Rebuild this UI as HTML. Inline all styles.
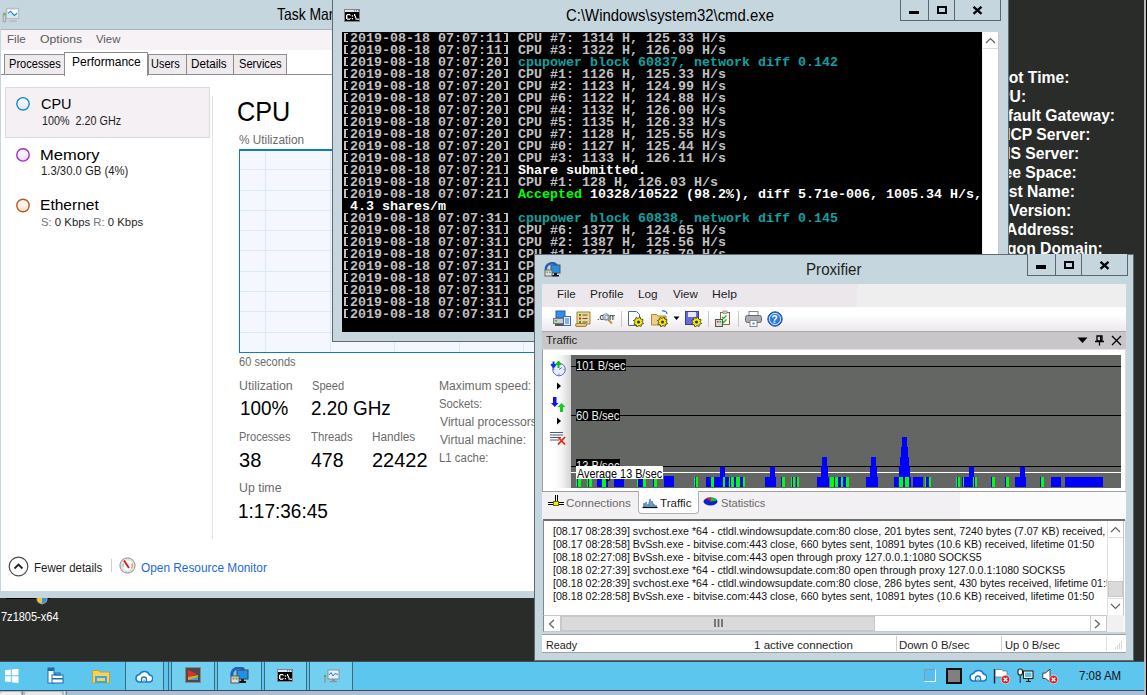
<!DOCTYPE html>
<html><head><meta charset="utf-8">
<style>
*{box-sizing:border-box;margin:0;padding:0}
html,body{width:1147px;height:695px;overflow:hidden}
body{position:relative;background:#2a2c2a;font-family:"Liberation Sans",sans-serif;color:#000}
.a{position:absolute}
.t{position:absolute;white-space:nowrap;line-height:1}
#con{font-family:"Liberation Mono",monospace;font-size:13.33px;font-weight:bold;color:#c0c0c0}
#con div{height:12px;line-height:12px;white-space:pre}
#con i{display:inline-block;width:8px;height:12px;position:relative;vertical-align:top}
#con i::before{content:'';box-sizing:border-box;position:absolute;left:2px;top:0.5px;width:4px;height:9px;border:0 solid #c0c0c0;border-top-width:1px;border-bottom-width:1px}
#con i.l::before{border-left-width:2px}
#con i.r::before{border-right-width:2px}
#con .c{color:#12a0a0}#con .w{color:#fff}#con .g{color:#00ff00}
</style></head><body>
<div class="t" style="left:987.8px;top:70.21px;font-size:15.7px;color:#fff;font-weight:bold">Boot Time:</div>
<div class="t" style="left:987.8px;top:89.21px;font-size:15.7px;color:#fff;font-weight:bold">CPU:</div>
<div class="t" style="left:987.8px;top:108.21px;font-size:15.7px;color:#fff;font-weight:bold">Default Gateway:</div>
<div class="t" style="left:987.8px;top:127.21px;font-size:15.7px;color:#fff;font-weight:bold">DHCP Server:</div>
<div class="t" style="left:987.8px;top:146.21px;font-size:15.7px;color:#fff;font-weight:bold">DNS Server:</div>
<div class="t" style="left:987.8px;top:165.21px;font-size:15.7px;color:#fff;font-weight:bold">Free Space:</div>
<div class="t" style="left:987.8px;top:184.21px;font-size:15.7px;color:#fff;font-weight:bold">Host Name:</div>
<div class="t" style="left:982.3px;top:203.21px;font-size:15.7px;color:#fff;font-weight:bold">OS Version:</div>
<div class="t" style="left:987.8px;top:222.21px;font-size:15.7px;color:#fff;font-weight:bold">IP Address:</div>
<div class="t" style="left:987.8px;top:241.21px;font-size:15.7px;color:#fff;font-weight:bold">Logon Domain:</div>
<div class="t" style="left:0.65px;top:610.62px;font-size:12.5px;color:#fff;transform:scale(0.8808,1.0);transform-origin:0 10.58px;">7z1805-x64</div>
<div class="a" style="left:6px;top:598px;width:44px;height:1px;background:#000"></div>
<svg class="a" style="left:36px;top:597px" width="12" height="8" viewBox="0 0 12 8"><path d="M0.5,0 H11.5 V2 Q11.5,6 6,7.5 Q0.5,6 0.5,2 Z" fill="#9aa4b0"/><path d="M1.5,0 H6 V6.5 Q1.5,5.5 1.5,2 Z" fill="#f0c820"/><path d="M6,0 H10.5 V2 Q10.5,5.5 6,6.5 Z" fill="#3a90e0"/></svg>
<div class="a" style="left:0px;top:0px;width:546px;height:598px;background:#c6d6df"></div>
<svg class="a" style="left:2px;top:7px" width="18" height="16" viewBox="0 0 18 16"><rect x="1.2" y="6" width="2.6" height="9" rx="0.8" fill="#d0d0d0" stroke="#8a8a8a" stroke-width="0.7"/><rect x="1.5" y="6.4" width="2" height="1.8" fill="#30d030"/><rect x="4.5" y="1.3" width="12.3" height="10.2" fill="#e4e4e4" stroke="#b0b0b0" stroke-width="0.8"/><rect x="6" y="3" width="9.3" height="7" fill="#fff"/><path d="M6,6.3 L8.4,4.2 L12.3,8.4 L14.6,6.3 L15.3,6.3 V10 H6 Z" fill="#c8ecfa"/><polyline points="6,6.3 8.4,4.2 12.3,8.4 15,6.2" fill="none" stroke="#1a80c8" stroke-width="1.1"/><rect x="9.5" y="11.5" width="3" height="2" fill="#c8c8c8"/><rect x="7" y="13.3" width="8" height="1.6" fill="#bdbdbd"/></svg>
<div class="t" style="left:276.72px;top:6.23px;font-size:16.5px;color:#000;transform:scale(0.8439,1.0);transform-origin:0 13.97px;">Task Manager</div>
<div class="a" style="left:1px;top:30px;width:545px;height:20px;background:#f6f2f6"></div>
<div class="a" style="left:1px;top:29px;width:545px;height:1px;background:#a9b5bd"></div>
<div class="t" style="left:7.47px;top:34.19px;font-size:11px;color:#5a5a5a;transform:scale(1.0579,1.0);transform-origin:0 9.31px;">File</div>
<div class="t" style="left:39.91px;top:34.19px;font-size:11px;color:#5a5a5a;transform:scale(1.1093,1.0);transform-origin:0 9.31px;">Options</div>
<div class="t" style="left:96.20px;top:34.19px;font-size:11px;color:#5a5a5a;transform:scale(1.0282,1.0);transform-origin:0 9.31px;">View</div>
<div class="a" style="left:1px;top:50px;width:545px;height:541px;background:#fff"></div>
<div class="a" style="left:1px;top:74px;width:545px;height:1px;background:#8c8c8c"></div>
<div class="a" style="left:4px;top:54px;width:61px;height:21px;background:#eeeaee;border:1px solid #8c8c8c"></div>
<div class="a" style="left:148px;top:54px;width:39px;height:21px;background:#eeeaee;border:1px solid #8c8c8c"></div>
<div class="a" style="left:186px;top:54px;width:48px;height:21px;background:#eeeaee;border:1px solid #8c8c8c"></div>
<div class="a" style="left:233px;top:54px;width:54px;height:21px;background:#eeeaee;border:1px solid #8c8c8c"></div>
<div class="a" style="left:64px;top:52px;width:84px;height:24px;background:#fff;border:1px solid #8c8c8c;border-bottom:none"></div>
<div class="t" style="left:8.61px;top:57.92px;font-size:12.5px;color:#000;transform:scale(0.8863,1.0);transform-origin:0 10.58px;">Processes</div>
<div class="t" style="left:151.43px;top:57.92px;font-size:12.5px;color:#000;transform:scale(0.8792,1.0);transform-origin:0 10.58px;">Users</div>
<div class="t" style="left:191.37px;top:57.92px;font-size:12.5px;color:#000;transform:scale(0.9339,1.0);transform-origin:0 10.58px;">Details</div>
<div class="t" style="left:238.55px;top:57.92px;font-size:12.5px;color:#000;transform:scale(0.8904,1.0);transform-origin:0 10.58px;">Services</div>
<div class="t" style="left:71.54px;top:55.82px;font-size:12.5px;color:#000;transform:scale(0.9614,1.0);transform-origin:0 10.58px;">Performance</div>
<div class="a" style="left:5px;top:87px;width:205px;height:51px;background:#f4f0f4;border:1px solid #dcdcdc"></div>
<svg class="a" style="left:16px;top:97px" width="15" height="15" viewBox="0 0 15 15"><defs><linearGradient id="cg0" x1="0" y1="0" x2="0" y2="1"><stop offset="0" stop-color="#ffffff"/><stop offset="1" stop-color="#d6e8f6"/></linearGradient></defs><circle cx="7" cy="6.85" r="6.2" fill="url(#cg0)" stroke="#1a86cc" stroke-width="1.4"/></svg>
<svg class="a" style="left:16px;top:148px" width="15" height="15" viewBox="0 0 15 15"><defs><linearGradient id="cg1" x1="0" y1="0" x2="0" y2="1"><stop offset="0" stop-color="#ffffff"/><stop offset="1" stop-color="#f1dcf8"/></linearGradient></defs><circle cx="7" cy="6.90" r="6.2" fill="url(#cg1)" stroke="#9b30c8" stroke-width="1.4"/></svg>
<svg class="a" style="left:16px;top:198px" width="15" height="15" viewBox="0 0 15 15"><defs><linearGradient id="cg2" x1="0" y1="0" x2="0" y2="1"><stop offset="0" stop-color="#ffffff"/><stop offset="1" stop-color="#f8e2cc"/></linearGradient></defs><circle cx="7" cy="7.50" r="6.2" fill="url(#cg2)" stroke="#b85a1c" stroke-width="1.4"/></svg>
<div class="t" style="left:40.68px;top:96.73px;font-size:14.5px;color:#000;transform:scale(0.9985,1.0);transform-origin:0 12.27px;">CPU</div>
<div class="t" style="left:42.04px;top:114.84px;font-size:12px;color:#1e1e1e;transform:scale(0.8994,1.0);transform-origin:0 10.16px;">100%&nbsp; 2.20 GHz</div>
<div class="t" style="left:40.08px;top:147.73px;font-size:14.5px;color:#000;transform:scale(1.1386,1.0);transform-origin:0 12.27px;">Memory</div>
<div class="t" style="left:40.61px;top:165.34px;font-size:12px;color:#1e1e1e;transform:scale(0.9415,1.0);transform-origin:0 10.16px;">1.3/30.0 GB (4%)</div>
<div class="t" style="left:40.16px;top:198.43px;font-size:14.5px;color:#000;transform:scale(1.0729,1.0);transform-origin:0 12.27px;">Ethernet</div>
<div class="t" style="left:40.95px;top:216.87px;font-size:11.5px;color:#1e1e1e;transform:scale(0.9859,1.0);transform-origin:0 9.73px;"><span style="color:#777">S:</span> 0 Kbps <span style="color:#777">R:</span> 0 Kbps</div>
<div class="a" style="left:212px;top:96px;width:1px;height:443px;background:#e3e3e3"></div>
<div class="t" style="left:236.94px;top:97.72px;font-size:27.5px;color:#000;transform:scale(0.9177,1.0);transform-origin:0 23.28px;">CPU</div>
<div class="t" style="left:239.15px;top:133.84px;font-size:12px;color:#6b6b6b;transform:scale(0.9848,1.0);transform-origin:0 10.16px;">% Utilization</div>
<div class="a" style="left:239px;top:149px;width:310px;height:204px;background:#f4f7fd;border:1px solid #117dbb;border-top-width:2px"></div>
<div class="a" style="left:240px;top:169px;width:308px;height:1px;background:#d9e9f6"></div>
<div class="a" style="left:240px;top:190px;width:308px;height:1px;background:#d9e9f6"></div>
<div class="a" style="left:240px;top:210px;width:308px;height:1px;background:#d9e9f6"></div>
<div class="a" style="left:240px;top:230px;width:308px;height:1px;background:#d9e9f6"></div>
<div class="a" style="left:240px;top:250px;width:308px;height:1px;background:#d9e9f6"></div>
<div class="a" style="left:240px;top:271px;width:308px;height:1px;background:#d9e9f6"></div>
<div class="a" style="left:240px;top:291px;width:308px;height:1px;background:#d9e9f6"></div>
<div class="a" style="left:240px;top:311px;width:308px;height:1px;background:#d9e9f6"></div>
<div class="a" style="left:240px;top:332px;width:308px;height:1px;background:#d9e9f6"></div>
<div class="a" style="left:265px;top:151px;width:1px;height:201px;background:#d9e9f6"></div>
<div class="a" style="left:330px;top:151px;width:1px;height:201px;background:#d9e9f6"></div>
<div class="a" style="left:394px;top:151px;width:1px;height:201px;background:#d9e9f6"></div>
<div class="a" style="left:459px;top:151px;width:1px;height:201px;background:#d9e9f6"></div>
<div class="a" style="left:523px;top:151px;width:1px;height:201px;background:#d9e9f6"></div>
<div class="t" style="left:239.25px;top:355.84px;font-size:12px;color:#6b6b6b;transform:scale(0.9219,1.0);transform-origin:0 10.16px;">60 seconds</div>
<div class="t" style="left:238.63px;top:379.84px;font-size:12px;color:#6b6b6b;transform:scale(1.0316,1.0);transform-origin:0 10.16px;">Utilization</div>
<div class="t" style="left:311.85px;top:379.84px;font-size:12px;color:#6b6b6b;transform:scale(0.9271,1.0);transform-origin:0 10.16px;">Speed</div>
<div class="t" style="left:239.58px;top:399.29px;font-size:19.5px;color:#000;transform:scale(0.9679,1.0);transform-origin:0 16.51px;">100%</div>
<div class="t" style="left:311.36px;top:399.29px;font-size:19.5px;color:#000;transform:scale(0.9676,1.0);transform-origin:0 16.51px;">2.20 GHz</div>
<div class="t" style="left:238.62px;top:430.84px;font-size:12px;color:#6b6b6b;transform:scale(0.9195,1.0);transform-origin:0 10.16px;">Processes</div>
<div class="t" style="left:310.77px;top:430.84px;font-size:12px;color:#6b6b6b;transform:scale(0.9442,1.0);transform-origin:0 10.16px;">Threads</div>
<div class="t" style="left:371.76px;top:430.84px;font-size:12px;color:#6b6b6b;transform:scale(0.9811,1.0);transform-origin:0 10.16px;">Handles</div>
<div class="t" style="left:238.90px;top:451.49px;font-size:19.5px;color:#000;transform:scale(1.0294,1.0);transform-origin:0 16.51px;">38</div>
<div class="t" style="left:310.61px;top:451.49px;font-size:19.5px;color:#000;transform:scale(0.9987,1.0);transform-origin:0 16.51px;">478</div>
<div class="t" style="left:371.70px;top:451.49px;font-size:19.5px;color:#000;transform:scale(1.0239,1.0);transform-origin:0 16.51px;">22422</div>
<div class="t" style="left:238.64px;top:482.34px;font-size:12px;color:#6b6b6b;transform:scale(1.0282,1.0);transform-origin:0 10.16px;">Up time</div>
<div class="t" style="left:238.17px;top:501.99px;font-size:19.5px;color:#000;transform:scale(0.9745,1.0);transform-origin:0 16.51px;">1:17:36:45</div>
<div class="t" style="left:438.53px;top:379.54px;font-size:12px;color:#6b6b6b;transform:scale(1.0095,1.0);transform-origin:0 10.16px;">Maximum speed:</div>
<div class="t" style="left:439.05px;top:397.54px;font-size:12px;color:#6b6b6b;transform:scale(0.9396,1.0);transform-origin:0 10.16px;">Sockets:</div>
<div class="t" style="left:439.50px;top:415.54px;font-size:12px;color:#6b6b6b;transform:scale(1.0114,1.0);transform-origin:0 10.16px;">Virtual processors:</div>
<div class="t" style="left:439.50px;top:433.54px;font-size:12px;color:#6b6b6b;transform:scale(1.0027,1.0);transform-origin:0 10.16px;">Virtual machine:</div>
<div class="t" style="left:438.59px;top:451.54px;font-size:12px;color:#6b6b6b;transform:scale(0.9496,1.0);transform-origin:0 10.16px;">L1 cache:</div>
<svg class="a" style="left:8px;top:556px" width="21" height="21" viewBox="0 0 21 21"><circle cx="10.5" cy="10.5" r="9.3" fill="#fff" stroke="#4a4a4a" stroke-width="1.2"/><polyline points="6.5,12.5 10.5,8.5 14.5,12.5" fill="none" stroke="#222" stroke-width="1.8"/></svg>
<div class="t" style="left:34.48px;top:561.72px;font-size:12.5px;color:#1e1e1e;transform:scale(0.9197,1.0);transform-origin:0 10.58px;">Fewer details</div>
<div class="a" style="left:111px;top:559px;width:1px;height:13px;background:#cfcfcf"></div>
<svg class="a" style="left:119px;top:557px" width="17" height="17" viewBox="0 0 17 17"><circle cx="8.5" cy="8.5" r="7.6" fill="#e8e8e8" stroke="#8a8a8a" stroke-width="1"/><circle cx="8.5" cy="8.5" r="5.6" fill="#fff" stroke="#c8c8c8" stroke-width="0.6"/><path d="M12.8,6.5 A5,5 0 0 1 12.5,11.5" fill="none" stroke="#f08a30" stroke-width="1.2"/><path d="M4.2,10 A5,5 0 0 1 4.5,6.5" fill="none" stroke="#8ab080" stroke-width="1"/><line x1="5" y1="3.5" x2="10" y2="11" stroke="#d81818" stroke-width="1.8"/></svg>
<div class="t" style="left:141.13px;top:561.72px;font-size:12.5px;color:#1a6ad6;transform:scale(0.9482,1.0);transform-origin:0 10.58px;">Open Resource Monitor</div>
<div class="a" style="left:332px;top:0px;width:677px;height:342px;background:#c6d6df;border:1px solid #5f6a70;border-top:none"></div>
<svg class="a" style="left:344px;top:9px" width="16" height="13" viewBox="0 0 16 13"><rect x="0.5" y="0.5" width="15" height="12" fill="#000" stroke="#7d8388"/><rect x="1" y="1" width="14" height="2" fill="#e4e6ee"/><rect x="10" y="1.3" width="1" height="1" fill="#4a5a9a"/><rect x="12" y="1.3" width="1" height="1" fill="#4a5a9a"/><rect x="14" y="1.3" width="1" height="1" fill="#4a5a9a"/><g fill="#fff"><rect x="3" y="5" width="3" height="1.2"/><rect x="3" y="9.6" width="3" height="1.2"/><rect x="2" y="5.8" width="1.4" height="4.2"/><rect x="5.8" y="5.6" width="1" height="1"/><rect x="5.8" y="9.2" width="1" height="1"/><rect x="7.8" y="6.3" width="1.3" height="1.3"/><rect x="7.8" y="9" width="1.3" height="1.3"/><rect x="10" y="5" width="1.2" height="2"/><rect x="10.8" y="6.8" width="1.2" height="2"/><rect x="11.5" y="8.6" width="1.2" height="2.2"/><rect x="13" y="9.6" width="2" height="1.2"/></g></svg>
<div class="t" style="left:566.25px;top:7.76px;font-size:16px;color:#000;transform:scale(0.9319,1.0);transform-origin:0 13.54px;">C:\Windows\system32\cmd.exe</div>
<div class="a" style="left:900px;top:0px;width:101px;height:21px;border:1px solid #5d686d;border-top:none;background:#c6d6df"></div>
<div class="a" style="left:928px;top:0px;width:1px;height:20px;background:#5d686d"></div>
<div class="a" style="left:954px;top:0px;width:1px;height:20px;background:#5d686d"></div>
<div class="a" style="left:909px;top:10.5px;width:10px;height:3.5px;background:#000"></div>
<div class="a" style="left:937px;top:6px;width:10px;height:8px;border:2px solid #000"></div>
<svg class="a" style="left:972px;top:6px" width="11" height="9" viewBox="0 0 11 9"><path d="M1.5,0.8 L9.5,7.8 M9.5,0.8 L1.5,7.8" stroke="#000" stroke-width="2.3"/></svg>
<div id="con" class="a" style="left:342px;top:32px;width:640px;height:300px;background:#000;padding-top:0.5px;overflow:hidden"><div><i class="l"></i>2019-08-18 07:07:11<i class="r"></i> CPU #7: 1314 H, 125.33 H/s</div><div><i class="l"></i>2019-08-18 07:07:11<i class="r"></i> CPU #3: 1322 H, 126.09 H/s</div><div><i class="l"></i>2019-08-18 07:07:20<i class="r"></i> <span class="c">cpupower block 60837, network diff 0.142</span></div><div><i class="l"></i>2019-08-18 07:07:20<i class="r"></i> CPU #1: 1126 H, 125.33 H/s</div><div><i class="l"></i>2019-08-18 07:07:20<i class="r"></i> CPU #2: 1123 H, 124.99 H/s</div><div><i class="l"></i>2019-08-18 07:07:20<i class="r"></i> CPU #6: 1122 H, 124.88 H/s</div><div><i class="l"></i>2019-08-18 07:07:20<i class="r"></i> CPU #4: 1132 H, 126.00 H/s</div><div><i class="l"></i>2019-08-18 07:07:20<i class="r"></i> CPU #5: 1135 H, 126.33 H/s</div><div><i class="l"></i>2019-08-18 07:07:20<i class="r"></i> CPU #7: 1128 H, 125.55 H/s</div><div><i class="l"></i>2019-08-18 07:07:20<i class="r"></i> CPU #0: 1127 H, 125.44 H/s</div><div><i class="l"></i>2019-08-18 07:07:20<i class="r"></i> CPU #3: 1133 H, 126.11 H/s</div><div><i class="l"></i>2019-08-18 07:07:21<i class="r"></i> <span class="w">Share submitted.</span></div><div><i class="l"></i>2019-08-18 07:07:21<i class="r"></i> CPU #1: 128 H, 126.03 H/s</div><div><i class="l"></i>2019-08-18 07:07:21<i class="r"></i> <span class="g">Accepted</span><span class="w"> 10328/10522 (98.2%), diff 5.71e-006, 1005.34 H/s,</span></div><div><span class="w"> 4.3 shares/m</span></div><div><i class="l"></i>2019-08-18 07:07:31<i class="r"></i> <span class="c">cpupower block 60838, network diff 0.145</span></div><div><i class="l"></i>2019-08-18 07:07:31<i class="r"></i> CPU #6: 1377 H, 124.65 H/s</div><div><i class="l"></i>2019-08-18 07:07:31<i class="r"></i> CPU #2: 1387 H, 125.56 H/s</div><div><i class="l"></i>2019-08-18 07:07:31<i class="r"></i> CPU #1: 1371 H, 126.70 H/s</div><div><i class="l"></i>2019-08-18 07:07:31<i class="r"></i> CPU #4: 1367 H, 126.12 H/s</div><div><i class="l"></i>2019-08-18 07:07:31<i class="r"></i> CPU #5: 1368 H, 126.33 H/s</div><div><i class="l"></i>2019-08-18 07:07:31<i class="r"></i> CPU #7: 1370 H, 125.91 H/s</div><div><i class="l"></i>2019-08-18 07:07:31<i class="r"></i> CPU #0: 1368 H, 125.40 H/s</div><div><i class="l"></i>2019-08-18 07:07:31<i class="r"></i> CPU #3: 1372 H, 126.02 H/s</div></div>
<div class="a" style="left:982px;top:32px;width:17px;height:300px;background:#fff;border-right:1px solid #c8c8c8;border-left:1px solid #f0f0f0"></div>
<div class="a" style="left:983px;top:48px;width:15px;height:1px;background:#dcdcdc"></div>
<svg class="a" style="left:985px;top:37px" width="11" height="7" viewBox="0 0 11 7"><polyline points="1,6 5.5,1.5 10,6" fill="none" stroke="#606060" stroke-width="1.2"/></svg>
<div class="a" style="left:534px;top:254px;width:600px;height:407px;background:#c6d6df;border:1px solid #5f6a70"></div>
<svg class="a" style="left:544px;top:262px" width="17" height="15" viewBox="0 0 17 15"><path d="M2,8 A6,6 0 0 1 13,4" fill="none" stroke="#1f5fc0" stroke-width="2.5"/><rect x="7" y="3" width="9" height="8" fill="#1e90e8" stroke="#555" stroke-width="1"/><rect x="10" y="11" width="3" height="2" fill="#222"/><rect x="8" y="13" width="7" height="1.5" fill="#111"/><rect x="1" y="8" width="7" height="6" fill="#ddd" stroke="#666" stroke-width="1"/><rect x="2.5" y="9.5" width="1.5" height="1.5" fill="#f07020"/><rect x="5" y="9.5" width="1.5" height="1.5" fill="#30c030"/></svg>
<div class="t" style="left:805.69px;top:260.63px;font-size:16.5px;color:#1e1e1e;transform:scale(0.9173,1.0);transform-origin:0 13.97px;">Proxifier</div>
<div class="a" style="left:1027px;top:254px;width:101px;height:22px;border:1px solid #5d686d;border-top:none;background:#c6d6df"></div>
<div class="a" style="left:1055px;top:254px;width:1px;height:21px;background:#5d686d"></div>
<div class="a" style="left:1081px;top:254px;width:1px;height:21px;background:#5d686d"></div>
<div class="a" style="left:1036px;top:265px;width:10px;height:4px;background:#000"></div>
<div class="a" style="left:1064px;top:261px;width:10px;height:8px;border:2px solid #000"></div>
<svg class="a" style="left:1099px;top:260.5px" width="11" height="9" viewBox="0 0 11 9"><path d="M1.5,0.8 L9.5,7.8 M9.5,0.8 L1.5,7.8" stroke="#000" stroke-width="2.3"/></svg>
<div class="a" style="left:542px;top:284px;width:584px;height:23px;background:linear-gradient(to right,#ebe7eb 0,#ebe7eb 315px,#eeeeee 315px)"></div>
<div class="t" style="left:557.27px;top:289.39px;font-size:11px;color:#1e1e1e;transform:scale(1.0519,1.0);transform-origin:0 9.31px;">File</div>
<div class="t" style="left:590.36px;top:289.39px;font-size:11px;color:#1e1e1e;transform:scale(1.0735,1.0);transform-origin:0 9.31px;">Profile</div>
<div class="t" style="left:638.46px;top:289.39px;font-size:11px;color:#1e1e1e;transform:scale(1.0679,1.0);transform-origin:0 9.31px;">Log</div>
<div class="t" style="left:672.80px;top:289.39px;font-size:11px;color:#1e1e1e;transform:scale(1.0493,1.0);transform-origin:0 9.31px;">View</div>
<div class="t" style="left:712.03px;top:289.39px;font-size:11px;color:#1e1e1e;transform:scale(1.1056,1.0);transform-origin:0 9.31px;">Help</div>
<div class="a" style="left:542px;top:307px;width:584px;height:24px;background:linear-gradient(to bottom,#fdfdfd 0%,#ffffff 30%,#ece8ec 100%)"></div>
<svg class="a" style="left:553px;top:310px" width="18" height="17" viewBox="0 0 18 17"><rect x="3" y="1" width="9" height="7" fill="#3a8ae8" stroke="#2a5aa8"/><rect x="0.5" y="8.5" width="11" height="5" fill="#c8ccd0" stroke="#777"/><rect x="2" y="10" width="2" height="1.5" fill="#2c2"/><rect x="10.5" y="6.5" width="7" height="9" fill="#e8f0ff" stroke="#3a6ac8"/><path d="M12,9h4M12,11h4M12,13h4" stroke="#3a6ac8"/><rect x="2" y="14" width="8" height="2" fill="#555"/></svg>
<svg class="a" style="left:575px;top:310px" width="17" height="17" viewBox="0 0 17 17"><path d="M2,2 h13 v12 h-13 z" fill="#f0d890" stroke="#a08040"/><rect x="0.5" y="13.5" width="11" height="3" rx="1.5" fill="#e8c878" stroke="#a08040"/><rect x="4" y="4" width="2" height="2" fill="#20a020"/><rect x="4" y="7.5" width="2" height="2" fill="#e02020"/><rect x="4" y="11" width="2" height="2" fill="#20a020"/><path d="M7.5,5h5M7.5,8.5h5M7.5,12h5" stroke="#555" stroke-width="1.2"/></svg>
<svg class="a" style="left:597px;top:311px" width="18" height="14" viewBox="0 0 18 14"><text x="0" y="9" font-family="Liberation Sans" font-size="9" fill="#000">.com</text><circle cx="9" cy="6" r="3.2" fill="#c8dcf0" fill-opacity="0.6" stroke="#6a8aaa"/><line x1="11" y1="8.5" x2="15" y2="12.5" stroke="#c09030" stroke-width="1.8"/></svg>
<div class="a" style="left:621px;top:311px;width:1px;height:16px;background:#c8c8c8"></div>
<svg class="a" style="left:627px;top:310px" width="17" height="17" viewBox="0 0 17 17"><path d="M1.5,1.5 h8 l3,3 v11 h-11 z" fill="#fff" stroke="#4a6a9a"/><polygon points="15.20,12.00 16.40,12.98 16.12,13.91 14.58,14.06 14.12,14.62 14.28,16.16 13.41,16.62 12.22,15.63 11.50,15.70 10.52,16.90 9.59,16.62 9.44,15.08 8.88,14.62 7.34,14.78 6.88,13.91 7.87,12.72 7.80,12.00 6.60,11.02 6.88,10.09 8.42,9.94 8.88,9.38 8.72,7.84 9.59,7.38 10.78,8.37 11.50,8.30 12.48,7.10 13.41,7.38 13.56,8.92 14.12,9.38 15.66,9.22 16.12,10.09 15.13,11.28" fill="#f4f000" stroke="#222" stroke-width="0.8"/><circle cx="11.5" cy="12" r="1.6" fill="#333"/></svg>
<svg class="a" style="left:651px;top:310px" width="19" height="17" viewBox="0 0 19 17"><path d="M0.5,4.5 h5 l1.5,1.5 h8 v9 h-14.5 z" fill="#f0d080" stroke="#a88a40"/><path d="M11,1 a4,3 0 0 1 5,3" fill="none" stroke="#3a6ab8" stroke-width="1.2"/><polygon points="15.20,12.00 16.40,12.98 16.12,13.91 14.58,14.06 14.12,14.62 14.28,16.16 13.41,16.62 12.22,15.63 11.50,15.70 10.52,16.90 9.59,16.62 9.44,15.08 8.88,14.62 7.34,14.78 6.88,13.91 7.87,12.72 7.80,12.00 6.60,11.02 6.88,10.09 8.42,9.94 8.88,9.38 8.72,7.84 9.59,7.38 10.78,8.37 11.50,8.30 12.48,7.10 13.41,7.38 13.56,8.92 14.12,9.38 15.66,9.22 16.12,10.09 15.13,11.28" fill="#f4f000" stroke="#222" stroke-width="0.8"/><circle cx="11.5" cy="12" r="1.6" fill="#333"/></svg>
<svg class="a" style="left:673px;top:316px" width="7" height="5" viewBox="0 0 7 5"><path d="M0.5,0.5 h6 l-3,3.5 z" fill="#000"/></svg>
<svg class="a" style="left:685px;top:310px" width="17" height="17" viewBox="0 0 17 17"><rect x="0.5" y="1.5" width="13" height="13" fill="#6a6ae0" stroke="#3a3aa0"/><rect x="3" y="2" width="8" height="5" fill="#e8e8f8"/><polygon points="15.20,12.00 16.40,12.98 16.12,13.91 14.58,14.06 14.12,14.62 14.28,16.16 13.41,16.62 12.22,15.63 11.50,15.70 10.52,16.90 9.59,16.62 9.44,15.08 8.88,14.62 7.34,14.78 6.88,13.91 7.87,12.72 7.80,12.00 6.60,11.02 6.88,10.09 8.42,9.94 8.88,9.38 8.72,7.84 9.59,7.38 10.78,8.37 11.50,8.30 12.48,7.10 13.41,7.38 13.56,8.92 14.12,9.38 15.66,9.22 16.12,10.09 15.13,11.28" fill="#f4f000" stroke="#222" stroke-width="0.8"/><circle cx="11.5" cy="12" r="1.6" fill="#333"/></svg>
<div class="a" style="left:708px;top:311px;width:1px;height:16px;background:#c8c8c8"></div>
<svg class="a" style="left:715px;top:310px" width="16" height="17" viewBox="0 0 16 17"><rect x="5.5" y="2.5" width="9" height="12" fill="#fff" stroke="#8a6a3a"/><rect x="8" y="1" width="4" height="2.5" fill="#ccc" stroke="#777" stroke-width="0.6"/><path d="M7,7 l1.5,1.5 l3,-3 M7,11 l1.5,1.5 l3,-3" fill="none" stroke="#20b020" stroke-width="1.3"/><rect x="0.5" y="9.5" width="7" height="7" fill="#d8d8d8" stroke="#555"/><rect x="2" y="11" width="1.5" height="1.5" fill="#e03030"/><rect x="4.5" y="11" width="1.5" height="1.5" fill="#30a030"/></svg>
<div class="a" style="left:738px;top:311px;width:1px;height:16px;background:#c8c8c8"></div>
<svg class="a" style="left:745px;top:311px" width="17" height="16" viewBox="0 0 17 16"><rect x="4" y="0.5" width="9" height="5" fill="#fff" stroke="#888"/><rect x="0.5" y="4.5" width="16" height="7" rx="2" fill="#a8acb4" stroke="#666"/><rect x="5" y="9.5" width="7" height="6" fill="#fff" stroke="#888"/><rect x="7.5" y="11.5" width="2" height="2" fill="#3a8ae8"/></svg>
<svg class="a" style="left:767px;top:311px" width="16" height="16" viewBox="0 0 16 16"><circle cx="8" cy="8" r="7.2" fill="#2a7ae0" stroke="#1a4aa0"/><circle cx="8" cy="8" r="5.6" fill="none" stroke="#fff" stroke-width="0.8"/><text x="4.6" y="12" font-family="Liberation Sans" font-weight="bold" font-size="10" fill="#fff">?</text></svg>
<div class="a" style="left:542px;top:331px;width:584px;height:19px;background:#c8c6c8;border-top:1px solid #a9a9a9;border-bottom:1px solid #a9a9a9"></div>
<div class="t" style="left:545.77px;top:335.47px;font-size:11.5px;color:#1e1e1e;transform:scale(0.9984,1.0);transform-origin:0 9.73px;">Traffic</div>
<svg class="a" style="left:1077px;top:337px" width="11" height="7" viewBox="0 0 11 7"><path d="M0.5,0.5 h10 l-5,5.5 z" fill="#000"/></svg>
<svg class="a" style="left:1094px;top:335px" width="11" height="11" viewBox="0 0 11 11"><path d="M3,1 h5 v5 h-5 z" fill="none" stroke="#000" stroke-width="1.3"/><path d="M1,6.5 h9 M5.5,6.5 v4" stroke="#000" stroke-width="1.3"/><rect x="6" y="1" width="1.5" height="5" fill="#000"/></svg>
<svg class="a" style="left:1111px;top:335px" width="11" height="11" viewBox="0 0 11 11"><path d="M1,1 L10,10 M10,1 L1,10" stroke="#000" stroke-width="1.3"/></svg>
<div class="a" style="left:542px;top:349px;width:584px;height:142px;background:#fff;border-right:1px solid #dcdcdc;border-left:1px solid #a0a0a0;border-top:1px solid #e2e2e2"></div>
<div class="a" style="left:554px;top:355px;width:17px;height:133px;background:linear-gradient(to right,#ffffff 0%,#f4f4f4 45%,#d4d4d4 100%)"></div>
<svg class="a" style="left:550px;top:361px" width="20" height="17" viewBox="0 0 20 17"><circle cx="9" cy="8.5" r="6.3" fill="#e8eefc" stroke="#5a6ac8" stroke-width="1"/><path d="M9,8.5 l3,-2" stroke="#5a6ac8" stroke-width="1"/><path d="M9,14v-1.5M3,8.5h1.5M15,8.5h-1.5" stroke="#5a6ac8" stroke-width="0.8"/><path d="M3.5,0.5 v4.5 M1.2,3.2 l2.3,3 l2.3,-3" stroke="#1030f0" stroke-width="2" fill="none"/><path d="M8.5,7 v-5 M6.2,3.8 l2.3,-3 l2.3,3" stroke="#10c020" stroke-width="2" fill="none"/></svg>
<svg class="a" style="left:556px;top:382px" width="6" height="8" viewBox="0 0 6 8"><path d="M1,0.5 l4,3.5 l-4,3.5 z" fill="#000"/></svg>
<svg class="a" style="left:551px;top:396px" width="15" height="17" viewBox="0 0 15 17"><path d="M2,1 h3.5 v6 h2 l-3.75,4 l-3.75,-4 h2 z" fill="#1010f0"/><path d="M9,16 v-5 h-2.5 l4,-4 l4,4 h-2.5 v5 z" fill="#10d020"/></svg>
<svg class="a" style="left:556px;top:417px" width="6" height="8" viewBox="0 0 6 8"><path d="M1,0.5 l4,3.5 l-4,3.5 z" fill="#000"/></svg>
<svg class="a" style="left:549px;top:431px" width="18" height="14" viewBox="0 0 18 14"><path d="M1,1.5h13M1,4h13M1,6.5h11M1,9h9" stroke="#4a5a80" stroke-width="1"/><path d="M9,6 l7,7.5 M16,6 l-7,7.5" stroke="#e82a10" stroke-width="1.8"/></svg>
<div class="a" style="left:571px;top:355px;width:550px;height:133px;background:#646664"></div>
<div class="a" style="left:571px;top:366px;width:550px;height:1px;background:#000"></div>
<div class="a" style="left:571px;top:415px;width:550px;height:1px;background:#000"></div>
<div class="a" style="left:571px;top:466px;width:550px;height:1px;background:#000"></div>
<div class="a" style="left:571px;top:472px;width:550px;height:1px;background:#fff"></div>
<div class="a" style="left:576px;top:477px;width:1px;height:10px;background:#00ff00"></div>
<div class="a" style="left:577px;top:477px;width:1px;height:10px;background:#0000ff"></div>
<div class="a" style="left:578px;top:477px;width:3px;height:10px;background:#00ff00"></div>
<div class="a" style="left:587px;top:477px;width:1px;height:10px;background:#00ff00"></div>
<div class="a" style="left:588px;top:477px;width:1px;height:10px;background:#0000ff"></div>
<div class="a" style="left:589px;top:477px;width:3px;height:10px;background:#00ff00"></div>
<div class="a" style="left:597px;top:477px;width:5px;height:10px;background:#0000ff"></div>
<div class="a" style="left:602px;top:477px;width:4px;height:10px;background:#00ff00"></div>
<div class="a" style="left:606px;top:477px;width:2px;height:10px;background:#0000ff"></div>
<div class="a" style="left:614px;top:477px;width:10px;height:10px;background:#0000ff"></div>
<div class="a" style="left:637px;top:477px;width:1px;height:10px;background:#00ff00"></div>
<div class="a" style="left:638px;top:477px;width:5px;height:10px;background:#0000ff"></div>
<div class="a" style="left:643px;top:477px;width:3px;height:10px;background:#00ff00"></div>
<div class="a" style="left:653px;top:477px;width:1px;height:10px;background:#0000ff"></div>
<div class="a" style="left:654px;top:477px;width:3px;height:10px;background:#00ff00"></div>
<div class="a" style="left:694px;top:477px;width:1px;height:10px;background:#00ff00"></div>
<div class="a" style="left:695px;top:477px;width:1px;height:10px;background:#0000ff"></div>
<div class="a" style="left:696px;top:477px;width:2px;height:10px;background:#00ff00"></div>
<div class="a" style="left:706px;top:477px;width:5px;height:10px;background:#0000ff"></div>
<div class="a" style="left:711px;top:477px;width:3px;height:10px;background:#00ff00"></div>
<div class="a" style="left:714px;top:477px;width:9px;height:10px;background:#0000ff"></div>
<div class="a" style="left:723px;top:477px;width:2px;height:10px;background:#00ff00"></div>
<div class="a" style="left:725px;top:477px;width:4px;height:10px;background:#0000ff"></div>
<div class="a" style="left:729px;top:477px;width:1px;height:10px;background:#00ff00"></div>
<div class="a" style="left:730px;top:477px;width:1px;height:10px;background:#0000ff"></div>
<div class="a" style="left:731px;top:477px;width:3px;height:10px;background:#00ff00"></div>
<div class="a" style="left:734px;top:477px;width:2px;height:10px;background:#0000ff"></div>
<div class="a" style="left:736px;top:477px;width:4px;height:10px;background:#00ff00"></div>
<div class="a" style="left:740px;top:477px;width:3px;height:10px;background:#0000ff"></div>
<div class="a" style="left:743px;top:477px;width:2px;height:10px;background:#00ff00"></div>
<div class="a" style="left:765px;top:477px;width:11px;height:10px;background:#0000ff"></div>
<div class="a" style="left:781px;top:477px;width:1px;height:10px;background:#0000ff"></div>
<div class="a" style="left:782px;top:477px;width:3px;height:10px;background:#00ff00"></div>
<div class="a" style="left:791px;top:477px;width:1px;height:10px;background:#00ff00"></div>
<div class="a" style="left:792px;top:477px;width:1px;height:10px;background:#0000ff"></div>
<div class="a" style="left:793px;top:477px;width:2px;height:10px;background:#00ff00"></div>
<div class="a" style="left:796px;top:477px;width:1px;height:10px;background:#0000ff"></div>
<div class="a" style="left:797px;top:477px;width:2px;height:10px;background:#00ff00"></div>
<div class="a" style="left:817px;top:477px;width:12px;height:10px;background:#0000ff"></div>
<div class="a" style="left:830px;top:477px;width:4px;height:10px;background:#00ff00"></div>
<div class="a" style="left:834px;top:477px;width:1px;height:10px;background:#0000ff"></div>
<div class="a" style="left:835px;top:477px;width:3px;height:10px;background:#00ff00"></div>
<div class="a" style="left:838px;top:477px;width:2px;height:10px;background:#0000ff"></div>
<div class="a" style="left:840px;top:477px;width:1px;height:10px;background:#0000ff"></div>
<div class="a" style="left:841px;top:477px;width:2px;height:10px;background:#00ff00"></div>
<div class="a" style="left:843px;top:477px;width:3px;height:10px;background:#0000ff"></div>
<div class="a" style="left:846px;top:477px;width:3px;height:10px;background:#00ff00"></div>
<div class="a" style="left:866px;top:477px;width:12px;height:10px;background:#0000ff"></div>
<div class="a" style="left:894px;top:477px;width:5px;height:10px;background:#0000ff"></div>
<div class="a" style="left:899px;top:477px;width:4px;height:10px;background:#00ff00"></div>
<div class="a" style="left:903px;top:477px;width:2px;height:10px;background:#0000ff"></div>
<div class="a" style="left:905px;top:477px;width:4px;height:10px;background:#00ff00"></div>
<div class="a" style="left:909px;top:477px;width:2px;height:10px;background:#0000ff"></div>
<div class="a" style="left:913px;top:477px;width:10px;height:10px;background:#0000ff"></div>
<div class="a" style="left:925px;top:477px;width:1px;height:10px;background:#00ff00"></div>
<div class="a" style="left:926px;top:477px;width:3px;height:10px;background:#0000ff"></div>
<div class="a" style="left:929px;top:477px;width:2px;height:10px;background:#00ff00"></div>
<div class="a" style="left:956px;top:477px;width:1px;height:10px;background:#00ff00"></div>
<div class="a" style="left:957px;top:477px;width:1px;height:10px;background:#0000ff"></div>
<div class="a" style="left:958px;top:477px;width:2px;height:10px;background:#00ff00"></div>
<div class="a" style="left:962px;top:477px;width:1px;height:10px;background:#0000ff"></div>
<div class="a" style="left:963px;top:477px;width:1px;height:10px;background:#00ff00"></div>
<div class="a" style="left:964px;top:477px;width:9px;height:10px;background:#0000ff"></div>
<div class="a" style="left:973px;top:477px;width:1px;height:10px;background:#00ff00"></div>
<div class="a" style="left:974px;top:477px;width:1px;height:10px;background:#0000ff"></div>
<div class="a" style="left:975px;top:477px;width:2px;height:10px;background:#00ff00"></div>
<div class="a" style="left:991px;top:477px;width:1px;height:10px;background:#0000ff"></div>
<div class="a" style="left:992px;top:477px;width:3px;height:10px;background:#00ff00"></div>
<div class="a" style="left:1005px;top:477px;width:1px;height:10px;background:#0000ff"></div>
<div class="a" style="left:1006px;top:477px;width:3px;height:10px;background:#00ff00"></div>
<div class="a" style="left:1015px;top:477px;width:11px;height:10px;background:#0000ff"></div>
<div class="a" style="left:1040px;top:477px;width:1px;height:10px;background:#0000ff"></div>
<div class="a" style="left:1041px;top:477px;width:3px;height:10px;background:#00ff00"></div>
<div class="a" style="left:1051px;top:477px;width:10px;height:10px;background:#0000ff"></div>
<div class="a" style="left:1065px;top:477px;width:38px;height:10px;background:#0000ff"></div>
<div class="a" style="left:664px;top:476px;width:10px;height:11px;background:#0000ff"></div>
<div class="a" style="left:720px;top:467px;width:5px;height:10px;background:#0000ff"></div>
<div class="a" style="left:770px;top:467px;width:5px;height:10px;background:#0000ff"></div>
<div class="a" style="left:822px;top:457px;width:5px;height:20px;background:#0000ff"></div>
<div class="a" style="left:821px;top:466px;width:7px;height:11px;background:#0000ff"></div>
<div class="a" style="left:871px;top:457px;width:5px;height:20px;background:#0000ff"></div>
<div class="a" style="left:870px;top:467px;width:7px;height:10px;background:#0000ff"></div>
<div class="a" style="left:902px;top:437px;width:5px;height:40px;background:#0000ff"></div>
<div class="a" style="left:901px;top:447px;width:7px;height:30px;background:#0000ff"></div>
<div class="a" style="left:900px;top:457px;width:9px;height:20px;background:#0000ff"></div>
<div class="a" style="left:899px;top:467px;width:11px;height:10px;background:#0000ff"></div>
<div class="a" style="left:969px;top:467px;width:5px;height:10px;background:#0000ff"></div>
<div class="a" style="left:1020px;top:467px;width:5px;height:10px;background:#0000ff"></div>
<div class="a" style="left:576px;top:359px;width:50px;height:12px;background:#000"></div>
<div class="t" style="left:576.22px;top:359.10px;font-size:13px;color:#ececec;transform:scale(0.8562,1.0);transform-origin:0 11.00px;">101 B/sec</div>
<div class="a" style="left:576px;top:409px;width:44px;height:12px;background:#000"></div>
<div class="t" style="left:576.44px;top:409.10px;font-size:13px;color:#ececec;transform:scale(0.8556,1.0);transform-origin:0 11.00px;">60 B/sec</div>
<div class="a" style="left:576px;top:459px;width:44px;height:12px;background:#000"></div>
<div class="t" style="left:576.22px;top:459.10px;font-size:13px;color:#ececec;transform:scale(0.8601,1.0);transform-origin:0 11.00px;">13 B/sec</div>
<div class="a" style="left:576px;top:466px;width:87px;height:13px;background:#fff"></div>
<div class="t" style="left:577.00px;top:466.60px;font-size:13px;color:#000;transform:scale(0.8323,1.0);transform-origin:0 11.00px;">Average 13 B/sec</div>
<div class="a" style="left:542px;top:491px;width:584px;height:29px;background:linear-gradient(to right,#f3f0f3 0,#f3f0f3 418px,#fbfbfb 418px);border-top:1px solid #a0a0a0"></div>
<div class="a" style="left:638px;top:491px;width:61px;height:23px;background:#fff;border:1px solid #b0b0b0;border-top:none;border-radius:0 0 4px 4px"></div>
<svg class="a" style="left:547px;top:494px" width="18" height="13" viewBox="0 0 18 13"><path d="M1,8.5 H17 M1,10.5 H17" stroke="#000" stroke-width="1"/><path d="M8.5,1 V8 M10.5,1 V8" stroke="#000" stroke-width="1"/><rect x="6.5" y="7.5" width="5" height="4" fill="#f0f000" stroke="#6a6a00" stroke-width="1"/></svg>
<div class="t" style="left:565.92px;top:497.87px;font-size:11.5px;color:#6a6a6a;transform:scale(1.0141,1.0);transform-origin:0 9.73px;">Connections</div>
<svg class="a" style="left:642px;top:495px" width="16" height="14" viewBox="0 0 16 14"><path d="M0.5,12.5 h15" stroke="#000" stroke-width="1.2"/><path d="M2,12v-4M4,12v-5M6,12v-3M8,12v-8M10,12v-6M12,12v-3M14,12v-2" stroke="#1030e0" stroke-width="1.1"/><path d="M3,12v-3M7,12v-5M11,12v-4" stroke="#10c020" stroke-width="1"/></svg>
<div class="t" style="left:659.77px;top:497.67px;font-size:11.5px;color:#1e1e1e;transform:scale(1.0048,1.0);transform-origin:0 9.73px;">Traffic</div>
<svg class="a" style="left:703px;top:496px" width="15" height="10" viewBox="0 0 15 10"><ellipse cx="7.5" cy="5.5" rx="7" ry="4" fill="#1020d0"/><path d="M7.5,5.5 L3,2 A7,4 0 0 1 8,1.5 z" fill="#e02020"/><path d="M7.5,5.5 L8,1.5 A7,4 0 0 1 14.3,4.5 z" fill="#20c020"/></svg>
<div class="t" style="left:720.96px;top:497.87px;font-size:11.5px;color:#6a6a6a;transform:scale(0.9645,1.0);transform-origin:0 9.73px;">Statistics</div>
<div class="a" style="left:543px;top:519px;width:582px;height:113px;background:#fff;border-top:2px solid #6e6e6e;border-left:1px solid #828790"></div>
<div class="a" style="left:544px;top:521px;width:563px;height:94px;overflow:hidden">
<div class="t" style="left:8.86px;top:4.77px;font-size:11.5px;color:#111;transform:scale(0.9250,1.0);transform-origin:0 9.73px;">[08.17 08:28:39] svchost.exe *64 - ctldl.windowsupdate.com:80 close, 201 bytes sent, 7240 bytes (7.07 KB) received, lifetime 01:50</div>
<div class="t" style="left:8.86px;top:17.77px;font-size:11.5px;color:#111;transform:scale(0.9250,1.0);transform-origin:0 9.73px;">[08.17 08:28:58] BvSsh.exe - bitvise.com:443 close, 660 bytes sent, 10891 bytes (10.6 KB) received, lifetime 01:50</div>
<div class="t" style="left:8.86px;top:30.77px;font-size:11.5px;color:#111;transform:scale(0.9250,1.0);transform-origin:0 9.73px;">[08.18 02:27:08] BvSsh.exe - bitvise.com:443 open through proxy 127.0.0.1:1080 SOCKS5</div>
<div class="t" style="left:8.86px;top:43.77px;font-size:11.5px;color:#111;transform:scale(0.9250,1.0);transform-origin:0 9.73px;">[08.18 02:27:39] svchost.exe *64 - ctldl.windowsupdate.com:80 open through proxy 127.0.0.1:1080 SOCKS5</div>
<div class="t" style="left:8.86px;top:56.77px;font-size:11.5px;color:#111;transform:scale(0.9250,1.0);transform-origin:0 9.73px;">[08.18 02:28:39] svchost.exe *64 - ctldl.windowsupdate.com:80 close, 286 bytes sent, 430 bytes received, lifetime 01:50</div>
<div class="t" style="left:8.86px;top:69.77px;font-size:11.5px;color:#111;transform:scale(0.9250,1.0);transform-origin:0 9.73px;">[08.18 02:28:58] BvSsh.exe - bitvise.com:443 close, 660 bytes sent, 10891 bytes (10.6 KB) received, lifetime 01:50</div>
</div>
<div class="a" style="left:1107px;top:521px;width:17px;height:94px;background:#fff;border-left:1px solid #e0e0e0;border-right:1px solid #c8c8c8"></div>
<div class="a" style="left:1108px;top:537px;width:15px;height:1px;background:#dcdcdc"></div>
<div class="a" style="left:1108px;top:581px;width:15px;height:16px;background:#dadada;border:1px solid #c8c8c8"></div>
<div class="a" style="left:1108px;top:598px;width:15px;height:1px;background:#dcdcdc"></div>
<svg class="a" style="left:1110px;top:526px" width="11" height="7" viewBox="0 0 11 7"><polyline points="1,6 5.5,1.5 10,6" fill="none" stroke="#606060" stroke-width="1.2"/></svg>
<svg class="a" style="left:1110px;top:603px" width="11" height="7" viewBox="0 0 11 7"><polyline points="1,1 5.5,5.5 10,1" fill="none" stroke="#606060" stroke-width="1.2"/></svg>
<div class="a" style="left:543px;top:615px;width:564px;height:17px;background:#fff;border:1px solid #c8c8c8;border-left:1px solid #828790"></div>
<div class="a" style="left:561px;top:616px;width:314px;height:15px;background:#dadada;border:1px solid #c8c8c8"></div>
<div class="a" style="left:560px;top:616px;width:1px;height:15px;background:#c8c8c8"></div>
<div class="a" style="left:1090px;top:616px;width:1px;height:15px;background:#c8c8c8"></div>
<svg class="a" style="left:548px;top:619px" width="7" height="10" viewBox="0 0 7 10"><polyline points="6,1 1.5,5 6,9" fill="none" stroke="#606060" stroke-width="1.2"/></svg>
<svg class="a" style="left:1094px;top:619px" width="7" height="10" viewBox="0 0 7 10"><polyline points="1,1 5.5,5 1,9" fill="none" stroke="#606060" stroke-width="1.2"/></svg>
<svg class="a" style="left:714px;top:619px" width="9" height="8" viewBox="0 0 9 8"><path d="M1,0V8M4.5,0V8M8,0V8" stroke="#606060" stroke-width="1.6"/></svg>
<div class="a" style="left:1107px;top:615px;width:17px;height:17px;background:#f3f0f3"></div>
<div class="a" style="left:542px;top:634px;width:584px;height:19px;background:#fff;border-top:1px solid #a0a0a0;border-bottom:1px solid #a0a0a0"></div>
<div class="t" style="left:545.64px;top:640.09px;font-size:11px;color:#1e1e1e;transform:scale(0.9768,1.0);transform-origin:0 9.31px;">Ready</div>
<div class="t" style="left:753.69px;top:640.09px;font-size:11px;color:#1e1e1e;transform:scale(1.0508,1.0);transform-origin:0 9.31px;">1 active connection</div>
<div class="a" style="left:896px;top:636px;width:1px;height:15px;background:#d0d0d0"></div>
<div class="t" style="left:899.39px;top:640.09px;font-size:11px;color:#1e1e1e;transform:scale(1.0380,1.0);transform-origin:0 9.31px;">Down 0 B/sec</div>
<div class="a" style="left:1001px;top:636px;width:1px;height:15px;background:#d0d0d0"></div>
<div class="t" style="left:1005.22px;top:640.09px;font-size:11px;color:#1e1e1e;transform:scale(1.0187,1.0);transform-origin:0 9.31px;">Up 0 B/sec</div>
<div class="a" style="left:1106px;top:636px;width:1px;height:15px;background:#e0e0e0"></div>
<svg class="a" style="left:1113px;top:640px" width="10" height="10" viewBox="0 0 10 10"><path d="M8,2h1M6,4h1M8,4h1M4,6h1M6,6h1M8,6h1M2,8h1M4,8h1M6,8h1M8,8h1" stroke="#aaa" stroke-width="1"/></svg>
<div class="a" style="left:0px;top:661px;width:1144px;height:30px;background:#5cc6ee;border-top:1px solid #3c4e58;border-bottom:1px solid #3c4e58"></div>
<div class="a" style="left:0px;top:691px;width:1144px;height:4px;background:#a9bdd6"></div>
<div class="a" style="left:0px;top:692px;width:21px;height:3px;background:#eceef2;border-radius:2px 2px 0 0"></div>
<div class="a" style="left:25px;top:692px;width:37px;height:3px;background:#e4e8f0;border-radius:2px 2px 0 0"></div>
<div class="a" style="left:22px;top:691px;width:1px;height:4px;background:#7a8a9a"></div>
<div class="a" style="left:64px;top:691px;width:1px;height:4px;background:#dde4ec"></div>
<div class="a" style="left:66px;top:691px;width:1px;height:4px;background:#7a8a9a"></div>
<div class="a" style="left:1144px;top:0px;width:2px;height:695px;background:#bcb9c0"></div>
<div class="a" style="left:1146px;top:0px;width:1px;height:695px;background:#000"></div>
<svg class="a" style="left:5px;top:669px" width="14" height="14" viewBox="0 0 14 14"><path d="M0,1.2 L5.8,0.5 V6.3 H0 Z M6.8,0.4 L13.5,-0.4 V6.3 H6.8 Z M0,7.3 H5.8 V13.1 L0,12.4 Z M6.8,7.3 H13.5 V14 L6.8,13.2 Z" fill="#fff"/></svg>
<svg class="a" style="left:46px;top:667px" width="18" height="18" viewBox="0 0 18 18"><rect x="2" y="1" width="6" height="15" fill="#fff" stroke="#1a6ab8"/><rect x="2" y="1" width="6" height="3" fill="#1a6ab8"/><rect x="6" y="8" width="11" height="8" fill="#fff" stroke="#1a6ab8"/><rect x="9" y="6" width="5" height="2" fill="none" stroke="#1a6ab8"/><rect x="6" y="11" width="11" height="1.5" fill="#1a6ab8"/></svg>
<svg class="a" style="left:92px;top:669px" width="18" height="15" viewBox="0 0 18 15"><path d="M0.5,1.5 h6 l1.5,1.5 h9.5 v11 h-17 z" fill="#f3d35a" stroke="#c9a030"/><rect x="3" y="7" width="12" height="7" fill="#3aa8e8"/><rect x="5" y="9" width="8" height="3" fill="#f3d35a"/></svg>
<div class="a" style="left:125px;top:662px;width:39px;height:28px;background:#72cfef;border-left:1px solid #3a6a80;border-right:1px solid #3a6a80"></div>
<div class="a" style="left:171px;top:662px;width:44px;height:28px;background:#72cfef;border-left:1px solid #3a6a80;border-right:1px solid #3a6a80"></div>
<div class="a" style="left:217px;top:662px;width:45px;height:28px;background:#72cfef;border-left:1px solid #3a6a80;border-right:1px solid #3a6a80"></div>
<div class="a" style="left:264px;top:662px;width:43px;height:28px;background:#72cfef;border-left:1px solid #3a6a80;border-right:1px solid #3a6a80"></div>
<div class="a" style="left:309px;top:662px;width:44px;height:28px;background:#72cfef;border-left:1px solid #3a6a80;border-right:1px solid #3a6a80"></div>
<div class="a" style="left:168px;top:662px;width:1px;height:28px;background:#3a6a80"></div>
<svg class="a" style="left:135px;top:670px" width="18" height="13" viewBox="0 0 18 13"><path d="M4,12 H14 A3.5,3.5 0 0 0 14.5,5 A5.5,5.5 0 0 0 4.5,4.5 A3.8,3.8 0 0 0 4,12 Z" fill="#fff" stroke="#1a78d0" stroke-width="1.6"/><path d="M6.5,12 V9.5 A2.5,2.5 0 0 1 11.5,9.5 V12" fill="none" stroke="#1a78d0" stroke-width="1.4"/><rect x="8.3" y="9.5" width="1.5" height="3" fill="#9a9a9a"/></svg>
<svg class="a" style="left:185px;top:667px" width="16" height="16" viewBox="0 0 16 16"><rect x="0.5" y="0.5" width="15" height="15" fill="#4a4a4a" stroke="#888"/><path d="M3,3 l9,4 l-9,3 z" fill="#e8302a"/><path d="M3,10 l10,-2 v5 h-10 z" fill="#f0a020"/><path d="M3,13 l10,-3 v3z" fill="#3aa0e0"/></svg>
<svg class="a" style="left:230px;top:667px" width="19" height="17" viewBox="0 0 19 17"><path d="M2,9 A7,7 0 0 1 14,3" fill="none" stroke="#1f5fc0" stroke-width="3"/><rect x="7" y="3" width="11" height="9" fill="#1e90e8" stroke="#444"/><rect x="11" y="12" width="3" height="2" fill="#222"/><rect x="9" y="14" width="7" height="2" fill="#111"/><rect x="1" y="9" width="8" height="7" fill="#ddd" stroke="#555"/><rect x="2.5" y="10.5" width="2" height="2" fill="#f07020"/><rect x="5.5" y="10.5" width="2" height="2" fill="#30c030"/></svg>
<svg class="a" style="left:277px;top:669px" width="16" height="13" viewBox="0 0 16 13"><rect x="0.5" y="0.5" width="15" height="12" fill="#000" stroke="#7d8388"/><rect x="1" y="1" width="14" height="2" fill="#e4e6ee"/><rect x="10" y="1.3" width="1" height="1" fill="#4a5a9a"/><rect x="12" y="1.3" width="1" height="1" fill="#4a5a9a"/><rect x="14" y="1.3" width="1" height="1" fill="#4a5a9a"/><g fill="#fff"><rect x="3" y="5" width="3" height="1.2"/><rect x="3" y="9.6" width="3" height="1.2"/><rect x="2" y="5.8" width="1.4" height="4.2"/><rect x="5.8" y="5.6" width="1" height="1"/><rect x="5.8" y="9.2" width="1" height="1"/><rect x="7.8" y="6.3" width="1.3" height="1.3"/><rect x="7.8" y="9" width="1.3" height="1.3"/><rect x="10" y="5" width="1.2" height="2"/><rect x="10.8" y="6.8" width="1.2" height="2"/><rect x="11.5" y="8.6" width="1.2" height="2.2"/><rect x="13" y="9.6" width="2" height="1.2"/></g></svg>
<svg class="a" style="left:323px;top:669px" width="17" height="15" viewBox="0 0 17 15"><rect x="5" y="1" width="11" height="9" fill="#e6f0f8" stroke="#8a9299" stroke-width="1"/><polyline points="6,6 8,3.5 10,7 12,4.5 15,5.5" fill="none" stroke="#1c7ed6" stroke-width="1"/><rect x="9" y="10" width="3" height="2" fill="#8a9299"/><rect x="7" y="12" width="7" height="1.2" fill="#8a9299"/><rect x="1" y="6" width="2" height="8" fill="#9aa0a4"/><rect x="1" y="6" width="2" height="2" fill="#2db84a"/></svg>
<div class="a" style="left:924px;top:669px;width:12px;height:13px;background:#52c0f8;border-left:1px solid #8a96a0;border-top:1px solid #8a96a0;border-right:1.5px solid #fff;border-bottom:1.5px solid #fff"></div>
<div class="a" style="left:946px;top:668px;width:16px;height:16px;background:#808080;border:2px solid #111"></div>
<svg class="a" style="left:969px;top:669px" width="18" height="13" viewBox="0 0 18 13"><path d="M4,12 H14 A3.5,3.5 0 0 0 14.5,5 A5.5,5.5 0 0 0 4.5,4.5 A3.8,3.8 0 0 0 4,12 Z" fill="#fff" stroke="#1a78d0" stroke-width="1.6"/><path d="M6.5,12 V9.5 A2.5,2.5 0 0 1 11.5,9.5 V12" fill="none" stroke="#1a78d0" stroke-width="1.4"/><rect x="8.3" y="9.5" width="1.5" height="3" fill="#9a9a9a"/></svg>
<svg class="a" style="left:993px;top:668px" width="18" height="16" viewBox="0 0 18 16"><path d="M1.5,1 V15.5" stroke="#222" stroke-width="1.4"/><path d="M2.2,1.5 H8.5 L10,3 H14 V9 H2.2 Z" fill="#fff" stroke="#666" stroke-width="0.7"/><circle cx="12.5" cy="11.5" r="4.3" fill="#e01818" stroke="#fff" stroke-width="0.6"/><path d="M10.7,9.7l3.6,3.6M14.3,9.7l-3.6,3.6" stroke="#fff" stroke-width="1.4"/></svg>
<svg class="a" style="left:1017px;top:668px" width="17" height="16" viewBox="0 0 17 16"><rect x="1" y="1" width="4.5" height="6" rx="2" fill="#fff" stroke="#222" stroke-width="1.1"/><path d="M3.2,7 V15" stroke="#222" stroke-width="1.1"/><path d="M3.2,7 V15" stroke="#fff" stroke-width="0.1"/><rect x="6.5" y="3" width="9.5" height="7.5" fill="#fff" stroke="#222" stroke-width="1.1"/><rect x="8" y="4.5" width="6.5" height="4.5" fill="#5ac6ee"/><path d="M9,13.5 H14 M11.5,10.5 V13.5" stroke="#222" stroke-width="1.2"/></svg>
<svg class="a" style="left:1042px;top:668px" width="17" height="16" viewBox="0 0 17 16"><path d="M0.8,5 H3.5 L8,1 V14 L3.5,10.5 H0.8 Z" fill="#fff" stroke="#333" stroke-width="0.9"/><circle cx="11.5" cy="11.5" r="4.3" fill="#e01818" stroke="#fff" stroke-width="0.6"/><path d="M9.7,9.7l3.6,3.6M13.3,9.7l-3.6,3.6" stroke="#fff" stroke-width="1.4"/></svg>
<div class="t" style="left:1079.03px;top:670.02px;font-size:12.5px;color:#111;transform:scale(0.9197,1.0);transform-origin:0 10.58px;">7:08 AM</div></body></html>
